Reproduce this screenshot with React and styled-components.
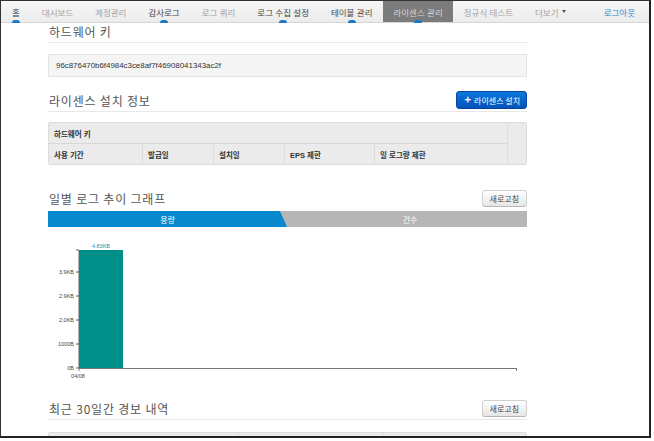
import React from 'react'
import styled, { createGlobalStyle } from 'styled-components'

const Global = createGlobalStyle`
  body {
    margin: 0;
    background: #fff;
    font-family: "Liberation Sans", "Noto Sans CJK KR", sans-serif;
  }
`

const Frame = styled.div`
  width: 648px;
  height: 435px;
  border: 1px solid #333;
  border-right: 2px solid #222;
  border-bottom: 2px solid #222;
  overflow: hidden;
  position: relative;
`

const Nav = styled.div`
  display: flex;
  align-items: stretch;
  height: 21px;
  background: linear-gradient(#f6f6f6, #ececec);
  border-bottom: 1px solid #d6d6d6;
`

const NavItem = styled.div`
  position: relative;
  display: flex;
  align-items: center;
  padding: 0 ${p => (p.$active ? 10 : 11)}px;
  margin-left: ${p => p.$push ? 'auto' : '0'};
  margin-right: ${p => p.$push ? '3px' : '0'};
  font-size: 8.5px;
  color: ${p => p.$tone === 'dark' ? '#444' : p.$tone === 'link' ? '#2c8ad0' : '#a2a2a2'};
  background: ${p => p.$active ? '#7b7b7b' : 'transparent'};
  ${p => p.$active && 'color: #d8d8d8;'}
  white-space: nowrap;
`

const Marker = styled.span`
  position: absolute;
  bottom: -1px;
  left: 50%;
  margin-left: -4px;
  width: 8px;
  height: 3px;
  border-radius: 4px 4px 0 0;
  background: #1b78c2;
`

const Caret = styled.span`
  display: inline-block;
  margin-left: 3px;
  border-left: 2.5px solid transparent;
  border-right: 2.5px solid transparent;
  border-top: 3px solid #555;
`

const Content = styled.div`
  width: 479px;
  margin-left: 47px;
  margin-top: -2px;
`

const Header = styled.div`
  display: flex;
  align-items: center;
  justify-content: space-between;
  height: 20px;
  margin-top: ${p => p.$top || 0}px;
  border-bottom: ${p => p.$line ? '1px solid #e8e8e8' : 'none'};
  padding-bottom: ${p => p.$line ? 1 : 0}px;
`

const Title = styled.h2`
  margin: 0 0 0 1px;
  font-family: "Noto Sans CJK KR", sans-serif;
  font-weight: 400;
  font-size: 12px;
  letter-spacing: 0.8px;
  color: #555;
`

const KeyBox = styled.div`
  margin-top: 11px;
  height: 21px;
  display: flex;
  align-items: center;
  padding-left: 7px;
  background: #f5f5f5;
  border: 1px solid #e3e3e3;
  font-size: 7.9px;
  color: #333;
`

const PrimaryButton = styled.div`
  display: flex;
  align-items: center;
  gap: 3px;
  height: 16px;
  padding: 0 6px 0 8px;
  border-radius: 3px;
  background: linear-gradient(#0a78dd, #0652b8);
  border: 1px solid #0646a0;
  color: #fff;
  font-size: 8px;
  font-family: "Noto Sans CJK KR", sans-serif;
`

const Plus = styled.span`
  font-weight: 700;
  font-size: 11px;
  line-height: 1;
  margin-top: -1px;
`

const Button = styled.div`
  display: flex;
  align-items: center;
  height: 15px;
  padding: 0 7px;
  border-radius: 3px;
  background: linear-gradient(#fff, #e6e6e6);
  border: 1px solid #d0d0d0;
  border-bottom-color: #b8b8b8;
  color: #444;
  font-size: 8px;
  font-family: "Noto Sans CJK KR", sans-serif;
`

const Table = styled.div`
  margin-top: 10px;
  display: grid;
  grid-template-columns: 94px 71px 71px 90px 133px 20px;
  background: #ebebeb;
  border: 1px solid #dcdcdc;
  border-radius: 2px;
`

const Cell = styled.div`
  height: 20px;
  display: flex;
  align-items: center;
  padding-left: 5px;
  font-size: 7.5px;
  font-weight: 700;
  color: #333;
  grid-column: ${p => p.$span ? `span ${p.$span}` : 'auto'};
  border-right: ${p => p.$last ? 'none' : '1px solid #dcdcdc'};
  border-bottom: ${p => p.$bottom ? '1px solid #d6d6d6' : 'none'};
`

const Side = styled.div`
  grid-column: 6;
  grid-row: 1 / span 2;
`

const Tabs = styled.div`
  display: flex;
  height: 16px;
  margin-top: 3px;
  background: #b6b6b6;
  font-family: "Noto Sans CJK KR", sans-serif;
  font-size: 8px;
  color: #fff;
`

const TabOn = styled.div`
  width: 239px;
  display: flex;
  align-items: center;
  justify-content: center;
  padding-right: 6px;
  background: #0989cd;
  clip-path: polygon(0 0, 232px 0, 239px 100%, 0 100%);
`

const TabOff = styled.div`
  flex: 1;
  display: flex;
  align-items: center;
  justify-content: center;
`

const Chart = styled.svg`
  display: block;
  width: 479px;
  height: 160px;
`

const AlertHead = styled.div`
  margin-top: 12px;
  display: grid;
  grid-template-columns: 190px 145px 1fr;
  height: 14px;
  background: #ebebeb;
  border: 1px solid #dcdcdc;
  border-radius: 2px;
`

const AlertCol = styled.div`
  border-right: ${p => p.$last ? 'none' : '1px solid #dcdcdc'};
`

const navs = [
  { label: '홈', tone: 'dark', mark: true },
  { label: '대시보드' },
  { label: '계정관리' },
  { label: '감사로그', tone: 'dark', mark: true },
  { label: '로그 쿼리' },
  { label: '로그 수집 설정', tone: 'dark', mark: true },
  { label: '테이블 관리', tone: 'dark', mark: true },
  { label: '라이센스 관리', active: true, mark: true },
  { label: '정규식 테스트' },
]

const ticks = [
  { y: 45, label: '3.9KB' },
  { y: 69, label: '2.9KB' },
  { y: 93, label: '2.0KB' },
  { y: 117, label: '1000B' },
  { y: 141, label: '0B' },
]

const TrendChart = () => (
  <Chart viewBox="0 0 479 160">
    <rect x="31" y="23" width="44" height="118" fill="#008e8a" />
    <text x="53" y="21" fontSize="5.5" fill="#1a8fa8" textAnchor="middle" fontFamily="Liberation Sans">4.83KB</text>
    <line x1="31" y1="23" x2="31" y2="141" stroke="#666" strokeWidth="1" />
    <line x1="28" y1="23" x2="31" y2="23" stroke="#666" strokeWidth="1" />
    <line x1="31" y1="141.5" x2="469" y2="141.5" stroke="#777" strokeWidth="1" />
    <line x1="468.5" y1="141" x2="468.5" y2="144" stroke="#777" strokeWidth="1" />
    <line x1="31" y1="141" x2="31" y2="144" stroke="#777" strokeWidth="1" />
    {ticks.map(t => (
      <g key={t.label}>
        <line x1="28" y1={t.y} x2="31" y2={t.y} stroke="#666" strokeWidth="1" />
        <text x="26" y={t.y + 2} fontSize="5.5" fill="#444" textAnchor="end" fontFamily="Liberation Sans">{t.label}</text>
      </g>
    ))}
    <text x="30" y="151" fontSize="5.5" fill="#444" textAnchor="middle" fontFamily="Liberation Sans">04/08</text>
  </Chart>
)

export default function App() {
  return (
    <Frame>
      <Global />
      <Nav>
        {navs.map(n => (
          <NavItem key={n.label} $tone={n.tone} $active={n.active}>
            {n.label}
            {n.mark && <Marker />}
          </NavItem>
        ))}
        <NavItem>
          더보기<Caret />
        </NavItem>
        <NavItem $tone="link" $push>로그아웃</NavItem>
      </Nav>
      <Content>
        <Header $line>
          <Title>하드웨어 키</Title>
        </Header>
        <KeyBox>96c876470b6f4984c3ce8af7f46908041343ac2f</KeyBox>
        <Header $line $top={13}>
          <Title>라이센스 설치 정보</Title>
          <PrimaryButton><Plus>+</Plus>라이센스 설치</PrimaryButton>
        </Header>
        <Table>
          <Cell $span={5} $bottom>하드웨어 키</Cell>
          <Side />
          <Cell>사용 기간</Cell>
          <Cell>발급일</Cell>
          <Cell>설치일</Cell>
          <Cell>EPS 제한</Cell>
          <Cell>일 로그량 제한</Cell>
        </Table>
        <Header $top={23}>
          <Title>일별 로그 추이 그래프</Title>
          <Button>새로고침</Button>
        </Header>
        <Tabs>
          <TabOn>용량</TabOn>
          <TabOff>건수</TabOff>
        </Tabs>
        <TrendChart />
        <Header $line $top={11}>
          <Title>최근 30일간 경보 내역</Title>
          <Button>새로고침</Button>
        </Header>
        <AlertHead>
          <AlertCol />
          <AlertCol />
          <AlertCol $last />
        </AlertHead>
      </Content>
    </Frame>
  )
}
